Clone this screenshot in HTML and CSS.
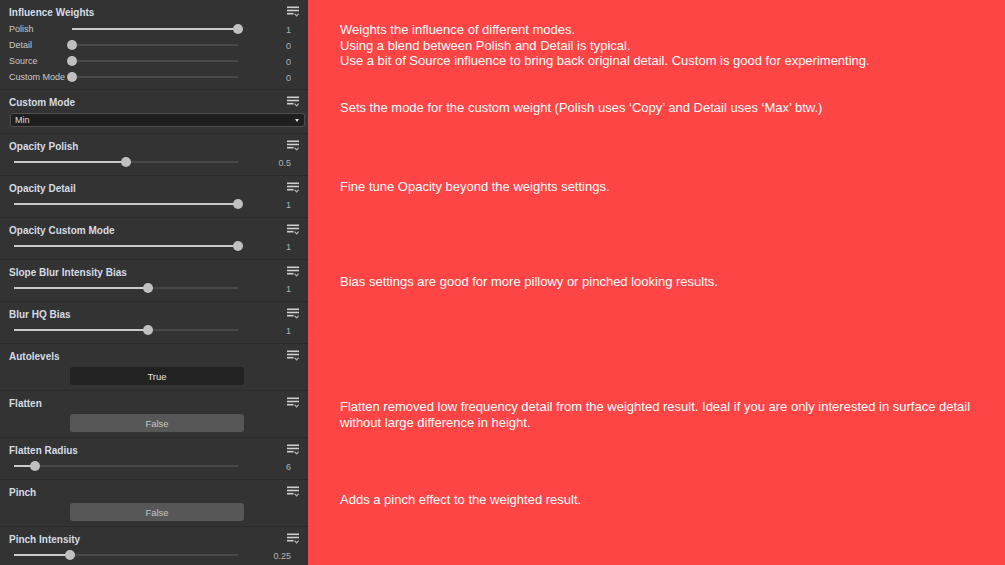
FILE: index.html
```html
<!DOCTYPE html>
<html>
<head>
    <title>Weights Settings</title>
    <link rel="stylesheet" href="styles.css">
</head>
<body>

<svg class="defs" width="0" height="0">
    <symbol id="menu-icon" viewBox="0 0 12 12">
        <rect x="0" y="0.5" width="12" height="1.6" fill="#d0d0d0"/>
        <rect x="0" y="3.7" width="12" height="1.6" fill="#d0d0d0"/>
        <rect x="0" y="6.9" width="6.5" height="1.6" fill="#d0d0d0"/>
        <polyline points="7.6,7.6 9.6,9.8 11.6,7.6" fill="none" stroke="#b8b8b8" stroke-width="1.2"/>
    </symbol>
</svg>

<div class="layout">
    <aside class="panel">

        <section class="group group-weights">
            <div class="group-head">
                <span class="group-title">Influence Weights</span>
                <svg class="menu-icon"><use href="#menu-icon"/></svg>
            </div>
            <div class="weight-row">
                <span class="weight-label">Polish</span>
                <div class="track track-short"><div class="fill" style="width:100%"></div><span class="knob" style="left:100%"></span></div>
                <span class="value">1</span>
            </div>
            <div class="weight-row">
                <span class="weight-label">Detail</span>
                <div class="track track-short"><div class="fill" style="width:0%"></div><span class="knob" style="left:0%"></span></div>
                <span class="value">0</span>
            </div>
            <div class="weight-row">
                <span class="weight-label">Source</span>
                <div class="track track-short"><div class="fill" style="width:0%"></div><span class="knob" style="left:0%"></span></div>
                <span class="value">0</span>
            </div>
            <div class="weight-row">
                <span class="weight-label">Custom Mode</span>
                <div class="track track-short"><div class="fill" style="width:0%"></div><span class="knob" style="left:0%"></span></div>
                <span class="value">0</span>
            </div>
        </section>

        <section class="group group-select">
            <div class="group-head">
                <span class="group-title">Custom Mode</span>
                <svg class="menu-icon"><use href="#menu-icon"/></svg>
            </div>
            <div class="dropdown">
                <span>Min</span>
                <span class="dropdown-arrow"></span>
            </div>
        </section>

        <section class="group">
            <div class="group-head">
                <span class="group-title">Opacity Polish</span>
                <svg class="menu-icon"><use href="#menu-icon"/></svg>
            </div>
            <div class="slider-row">
                <div class="track"><div class="fill" style="width:50%"></div><span class="knob" style="left:50%"></span></div>
                <span class="value">0.5</span>
            </div>
        </section>

        <section class="group">
            <div class="group-head">
                <span class="group-title">Opacity Detail</span>
                <svg class="menu-icon"><use href="#menu-icon"/></svg>
            </div>
            <div class="slider-row">
                <div class="track"><div class="fill" style="width:100%"></div><span class="knob" style="left:100%"></span></div>
                <span class="value">1</span>
            </div>
        </section>

        <section class="group">
            <div class="group-head">
                <span class="group-title">Opacity Custom Mode</span>
                <svg class="menu-icon"><use href="#menu-icon"/></svg>
            </div>
            <div class="slider-row">
                <div class="track"><div class="fill" style="width:100%"></div><span class="knob" style="left:100%"></span></div>
                <span class="value">1</span>
            </div>
        </section>

        <section class="group">
            <div class="group-head">
                <span class="group-title">Slope Blur Intensity Bias</span>
                <svg class="menu-icon"><use href="#menu-icon"/></svg>
            </div>
            <div class="slider-row">
                <div class="track"><div class="fill" style="width:60%"></div><span class="knob" style="left:60%"></span></div>
                <span class="value">1</span>
            </div>
        </section>

        <section class="group">
            <div class="group-head">
                <span class="group-title">Blur HQ Bias</span>
                <svg class="menu-icon"><use href="#menu-icon"/></svg>
            </div>
            <div class="slider-row">
                <div class="track"><div class="fill" style="width:60%"></div><span class="knob" style="left:60%"></span></div>
                <span class="value">1</span>
            </div>
        </section>

        <section class="group">
            <div class="group-head">
                <span class="group-title">Autolevels</span>
                <svg class="menu-icon"><use href="#menu-icon"/></svg>
            </div>
            <button class="toggle toggle-on">True</button>
        </section>

        <section class="group">
            <div class="group-head">
                <span class="group-title">Flatten</span>
                <svg class="menu-icon"><use href="#menu-icon"/></svg>
            </div>
            <button class="toggle">False</button>
        </section>

        <section class="group">
            <div class="group-head">
                <span class="group-title">Flatten Radius</span>
                <svg class="menu-icon"><use href="#menu-icon"/></svg>
            </div>
            <div class="slider-row">
                <div class="track"><div class="fill" style="width:9.5%"></div><span class="knob" style="left:9.5%"></span></div>
                <span class="value">6</span>
            </div>
        </section>

        <section class="group">
            <div class="group-head">
                <span class="group-title">Pinch</span>
                <svg class="menu-icon"><use href="#menu-icon"/></svg>
            </div>
            <button class="toggle">False</button>
        </section>

        <section class="group">
            <div class="group-head">
                <span class="group-title">Pinch Intensity</span>
                <svg class="menu-icon"><use href="#menu-icon"/></svg>
            </div>
            <div class="slider-row">
                <div class="track"><div class="fill" style="width:25%"></div><span class="knob" style="left:25%"></span></div>
                <span class="value">0.25</span>
            </div>
        </section>

    </aside>

    <main class="notes">
        <p class="note note-weights">Weights the influence of different modes.<br>
        Using a blend between Polish and Detail is typical.<br>
        Use a bit of Source influence to bring back original detail. Custom is good for experimenting.</p>

        <p class="note note-mode">Sets the mode for the custom weight (Polish uses ‘Copy’ and Detail uses ‘Max’ btw.)</p>

        <p class="note note-opacity">Fine tune Opacity beyond the weights settings.</p>

        <p class="note note-bias">Bias settings are good for more pillowy or pinched looking results.</p>

        <p class="note note-flatten">Flatten removed low frequency detail from the weighted result. Ideal if you are only interested in surface detail<br>
        without large difference in height.</p>

        <p class="note note-pinch">Adds a pinch effect to the weighted result.</p>
    </main>
</div>

</body>
</html>
```

FILE: styles.css
```css
/* Resetting default margin and padding */
body, p, section, button, div {
    margin: 0;
    padding: 0;
    box-sizing: border-box;
}

body {
    width: 1005px;
    height: 565px;
    overflow: hidden;
    font-family: "Liberation Sans", Arial, sans-serif;
    background-color: #fe4545;
}

.defs {
    position: absolute;
}

/* Two columns: settings panel and notes */
.layout {
    display: flex;
    height: 565px;
}

.panel {
    width: 308px;
    flex-shrink: 0;
    background-color: #333333;
    overflow: hidden;
}

/* One setting group */
.group {
    display: flex;
    flex-direction: column;
    padding: 5px 9px 4px 9px;
    border-bottom: 1px solid #2a2a2a;
}

.group-head {
    display: flex;
    justify-content: space-between;
    align-items: center;
    height: 14px;
}

.group-title {
    font-size: 10px;
    font-weight: bold;
    color: #d4dbe5;
}

.menu-icon {
    width: 12px;
    height: 12px;
}

/* Sliders */
.slider-row {
    display: flex;
    align-items: center;
    height: 18px;
    padding-left: 5px;
}

.track {
    position: relative;
    width: 224px;
    height: 2px;
    background-color: #484848;
}

.track-short {
    width: 166px;
}

.fill {
    height: 100%;
    background-color: #cacaca;
}

.knob {
    position: absolute;
    top: 50%;
    width: 10px;
    height: 10px;
    border-radius: 50%;
    background-color: #c0c0c0;
    transform: translate(-50%, -50%);
}

.value {
    flex: 1;
    text-align: right;
    padding-right: 8px;
    padding-top: 2px;
    font-size: 9px;
    color: #b4b4b4;
}

/* Influence weights rows */
.weight-row {
    display: flex;
    align-items: center;
    height: 16px;
}

.group-head + .weight-row {
    margin-top: 2px;
}

.weight-label {
    width: 63px;
    font-size: 9px;
    color: #c8c8c8;
}

/* Dropdown */
.group-select {
    padding-bottom: 6px;
}

.dropdown {
    display: flex;
    justify-content: space-between;
    align-items: center;
    height: 14px;
    margin: 4px -6px 0 1px;
    padding: 0 5px 0 4px;
    background-color: #1f1f1f;
    border: 1px solid #4e4e4e;
    border-radius: 3px;
    font-size: 9px;
    color: #dcdcdc;
}

.dropdown-arrow {
    width: 0;
    height: 0;
    border-left: 2.5px solid transparent;
    border-right: 2.5px solid transparent;
    border-top: 3px solid #e0e0e0;
}

/* Boolean buttons */
.toggle {
    width: 174px;
    height: 18px;
    margin: 4px 0 0 61px;
    border: none;
    border-radius: 3px;
    background-color: #575757;
    color: #c4c4c4;
    font-family: "Liberation Sans", Arial, sans-serif;
    font-size: 9.5px;
}

.group:has(.toggle) {
    padding-bottom: 5px;
}

.toggle-on {
    background-color: #222222;
    color: #e2e2e2;
}

/* Notes column */
.notes {
    flex: 1;
    padding-left: 32px;
    color: #ffffff;
    font-size: 13px;
    line-height: 15.5px;
}

.note-weights {
    margin-top: 22px;
}

.note-mode {
    margin-top: 31px;
}

.note-opacity {
    margin-top: 64px;
}

.note-bias {
    margin-top: 79px;
}

.note-flatten {
    margin-top: 110px;
}

.note-pinch {
    margin-top: 62px;
}
```
